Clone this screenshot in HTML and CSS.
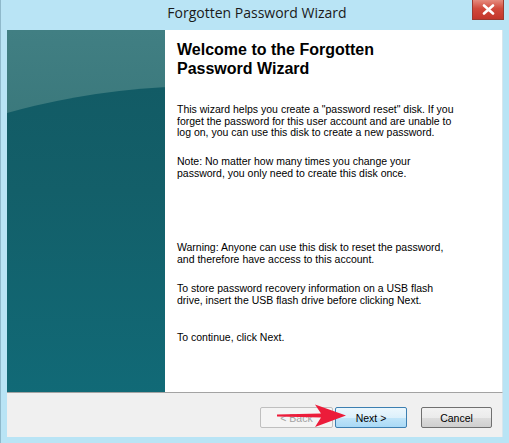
FILE: index.html
```html
<!DOCTYPE html>
<html>
<head>
<meta charset="utf-8">
<link rel="stylesheet" href="styles.css">
</head>
<body>
<div class="window">
  <div class="titlebar">
    <span class="title">Forgotten Password Wizard</span>
    <div class="close">
      <svg width="13" height="11" viewBox="0 0 13 11"><path d="M2 1.5 L11 9.5 M11 1.5 L2 9.5" stroke="#fff" stroke-width="2.6" stroke-linecap="round"/></svg>
    </div>
  </div>
  <div class="client">
    <div class="main">
      <div class="sidebar">
        <div class="swoosh"></div>
      </div>
      <div class="content">
        <h1 class="heading">Welcome to the Forgotten Password Wizard</h1>
        <p class="para p1">This wizard helps you create a "password reset" disk. If you forget the password for this user account and are unable to log on, you can use this disk to create a new password.</p>
        <p class="para p2">Note: No matter how many times you change your password, you only need to create this disk once.</p>
        <p class="para p3">Warning: Anyone can use this disk to reset the password, and therefore have access to this account.</p>
        <p class="para p4">To store password recovery information on a USB flash drive, insert the USB flash drive before clicking Next.</p>
        <p class="para p5">To continue, click Next.</p>
      </div>
    </div>
    <div class="footer">
      <button class="btn btn-back">&lt; Back</button>
      <button class="btn btn-next">Next &gt;</button>
      <button class="btn btn-cancel">Cancel</button>
      <svg class="arrow" width="80" height="30" viewBox="0 0 80 30">
        <path d="M2 11.6 L46 10.6 L40 1.5 L71 12.5 L40 24 L46 14.4 L2 13.4 Z" fill="#ec1c3a"/>
      </svg>
    </div>
  </div>
</div>
</body>
</html>
```

FILE: styles.css
```css
* { box-sizing: border-box; }
html, body {
  margin: 0;
  padding: 0;
}
body {
  width: 509px;
  height: 443px;
  overflow: hidden;
  background: #b7e3f4;
  font-family: "Liberation Sans", Arial, sans-serif;
}
.window {
  width: 509px;
  height: 443px;
  display: flex;
  flex-direction: column;
  background: #b9e4f5;
  border-left: 1px solid #8fb9cb;
}
.titlebar {
  height: 30px;
  position: relative;
  display: flex;
  justify-content: center;
  align-items: flex-start;
}
.title {
  font-family: "Open Sans", "Liberation Sans", sans-serif;
  font-size: 14px;
  line-height: 14px;
  padding-top: 6px;
  color: #1a1a1a;
  padding-left: 4px;
}
.close {
  position: absolute;
  top: 0;
  right: 5px;
  width: 32px;
  height: 20px;
  background: linear-gradient(#e58a7d, #d14a3c 45%, #c3362b);
  border: 1px solid #9a3a30;
  border-top: none;
  display: flex;
  align-items: center;
  justify-content: center;
}
.client {
  margin-left: 6px;
  margin-right: 6px;
  height: 407px;
  display: flex;
  flex-direction: column;
}
.main {
  height: 362px;
  display: flex;
  background: #fff;
  border-right: 1px solid #d6e6ee;
}
.sidebar {
  width: 158px;
  position: relative;
  overflow: hidden;
  background: linear-gradient(180deg, #417f83 0%, #387679 35%, #2d6e74 100%);
}
.swoosh {
  position: absolute;
  left: -250px;
  top: 56px;
  width: 900px;
  height: 520px;
  border-radius: 50%;
  background: linear-gradient(180deg, #125b65 0%, #135f69 20%, #116a77 60%, #117287 100%);
}
.content {
  flex: 1;
  padding: 10px 0 0 12px;
  color: #000;
}
.heading {
  margin: 0;
  font-size: 16px;
  line-height: 19px;
  font-weight: bold;
  width: 230px;
}
.para {
  margin: 0;
  font-size: 10.5px;
  line-height: 11.7px;
  width: 284px;
}
.p1 { margin-top: 26px; }
.p2 { margin-top: 17px; width: 240px; }
.p3 { margin-top: 62.6px; }
.p4 { margin-top: 17.6px; width: 270px; }
.p5 { margin-top: 25.6px; }
.footer {
  height: 45px;
  background: #f0f0f0;
  border-top: 1px solid #a3a3a3;
  border-right: 1px solid #d6e6ee;
  display: flex;
  align-items: flex-start;
  justify-content: flex-end;
  padding: 14px 10px 0 0;
  position: relative;
}
.btn {
  height: 21px;
  font-family: "Liberation Sans", Arial, sans-serif;
  font-size: 10.5px;
  padding: 0;
  border-radius: 2px;
  color: #000;
}
.btn-back {
  width: 73px;
  border: 1px solid #bfbfbf;
  background: #f4f4f4;
  color: #a3a3a3;
}
.btn-next {
  width: 72px;
  margin-left: 2px;
  border: 1px solid #3c7fb1;
  background: linear-gradient(#ecf7fd, #dcf0fb 50%, #c1e5f9 51%, #a9d9f6);
}
.btn-cancel {
  width: 71px;
  margin-left: 14px;
  border: 1px solid #707070;
  background: linear-gradient(#f2f2f2, #ebebeb 50%, #dddddd 51%, #cfcfcf);
}
.arrow {
  position: absolute;
  left: 268px;
  top: 10px;
}
```
